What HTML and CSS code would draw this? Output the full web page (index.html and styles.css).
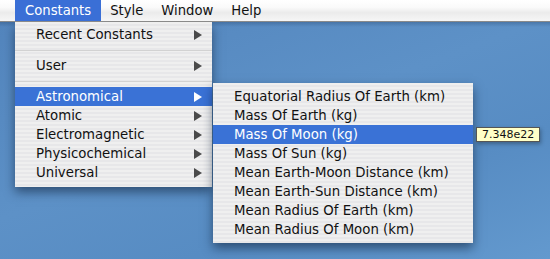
FILE: index.html
```html
<!DOCTYPE html>
<html lang="en">
<head>
    <meta charset="UTF-8">
    <title>Constants</title>
    <link rel="stylesheet" href="styles.css">
</head>
<body>
    <div class="menubar">
        <div class="bar-item active">Constants</div>
        <div class="bar-item">Style</div>
        <div class="bar-item">Window</div>
        <div class="bar-item">Help</div>
    </div>
    <div class="desktop">
        <div class="menu main-menu">
            <div class="item">Recent Constants <span class="arrow"></span></div>
            <div class="sep"></div>
            <div class="item">User <span class="arrow"></span></div>
            <div class="sep"></div>
            <div class="item selected">Astronomical <span class="arrow"></span></div>
            <div class="item">Atomic <span class="arrow"></span></div>
            <div class="item">Electromagnetic <span class="arrow"></span></div>
            <div class="item">Physicochemical <span class="arrow"></span></div>
            <div class="item">Universal <span class="arrow"></span></div>
        </div>
        <div class="menu sub-menu">
            <div class="item">Equatorial Radius Of Earth (km)</div>
            <div class="item">Mass Of Earth (kg)</div>
            <div class="item selected">Mass Of Moon (kg)</div>
            <div class="item">Mass Of Sun (kg)</div>
            <div class="item">Mean Earth-Moon Distance (km)</div>
            <div class="item">Mean Earth-Sun Distance (km)</div>
            <div class="item">Mean Radius Of Earth (km)</div>
            <div class="item">Mean Radius Of Moon (km)</div>
        </div>
        <div class="tooltip">7.348e22</div>
    </div>
</body>
</html>
```

FILE: styles.css
```css
html, body {
    margin: 0;
    padding: 0;
    height: 100%;
}
body {
    font-family: "DejaVu Sans", sans-serif;
    font-size: 13.3px;
    color: #111;
    display: flex;
    flex-direction: column;
    overflow: hidden;
}
.menubar {
    height: 21px;
    display: flex;
    padding-left: 15px;
    background: linear-gradient(#ffffff 0%, #fafafa 35%, #ebebeb 60%, #f6f6f6 100%);
    border-bottom: 1px solid #8a8a8a;
    position: relative;
    z-index: 2;
}
.bar-item {
    padding: 0 9px;
    line-height: 21px;
    font-size: 13.2px;
}
.bar-item.active {
    padding: 0 10px;
    background: #3a6fd6;
    color: #fff;
}
.desktop {
    flex: 1;
    position: relative;
    background:
        linear-gradient(180deg, rgba(30,60,100,0.3) 0px, rgba(30,60,100,0) 5px),
        linear-gradient(160deg, #5385bd 0%, #5d91c7 45%, #578cc3 70%, #6399ce 100%);
}
.menu {
    position: absolute;
    background: repeating-linear-gradient(#efefef 0px, #efefef 2px, #e7e7e9 2px, #e7e7e9 4px);
    box-shadow: 0 5px 10px rgba(10,25,50,0.55);
}
.main-menu {
    left: 15px;
    top: 0;
    width: 197px;
    padding: 3px 0 5px;
}
.sub-menu {
    left: 213px;
    top: 61px;
    width: 260px;
    padding: 4px 0 4px;
}
.item {
    height: 19px;
    line-height: 19px;
    padding: 0 10px 0 21px;
    display: flex;
    justify-content: space-between;
    align-items: center;
    white-space: nowrap;
}
.item.selected {
    background: #3a72d6;
    color: #fff;
}
.arrow {
    width: 0;
    height: 0;
    border-top: 5px solid transparent;
    border-bottom: 5px solid transparent;
    border-left: 8px solid #4a4a4a;
}
.selected .arrow {
    border-left-color: #fff;
}
.sep {
    height: 1px;
    background: #d2d2d2;
    margin: 6px 0 5px;
}
.tooltip {
    position: absolute;
    left: 476px;
    top: 105px;
    padding: 0 5px;
    height: 13px;
    line-height: 13px;
    font-size: 11px;
    background: #ffffc7;
    border: 1px solid #555;
    color: #111;
    box-shadow: 1px 2px 4px rgba(0,0,0,0.3);
}
```
